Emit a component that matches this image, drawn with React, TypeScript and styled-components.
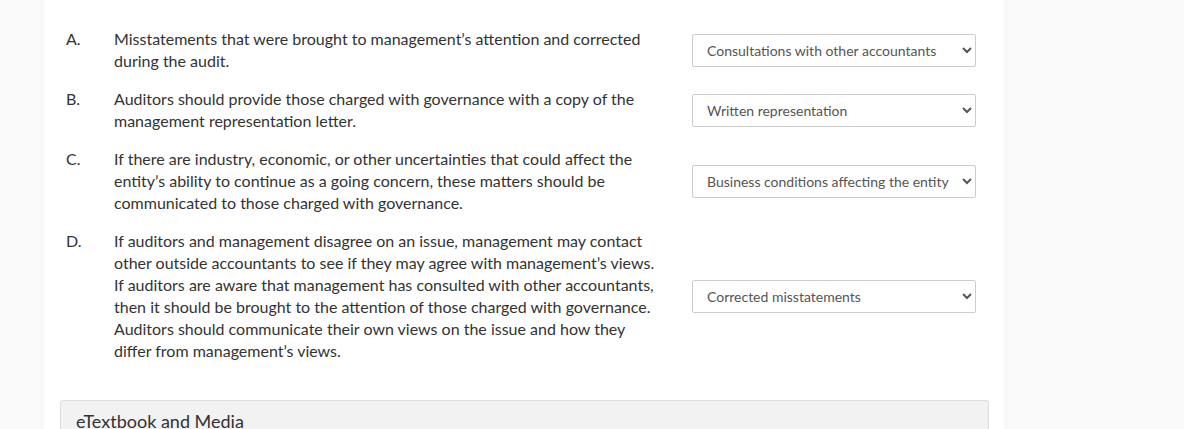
import styled, { createGlobalStyle } from "styled-components";

const GlobalStyle = createGlobalStyle`
  html, body {
    margin: 0;
    padding: 0;
    background: #f9f9f9;
    font-family: Lato, "Open Sans", sans-serif;
    color: #333;
  }
`;

const Panel = styled.div`
  margin-left: 44px;
  width: 960px;
  min-height: 429px;
  background: #fff;
  padding-top: 28px;
  box-sizing: border-box;
`;

const List = styled.ol`
  list-style: none;
  margin: 0;
  padding: 0 0 0 22px;
  display: flex;
  flex-direction: column;
  gap: 16px;
`;

const Row = styled.li`
  display: grid;
  grid-template-columns: 48px 556px 284px;
  column-gap: 0;
  align-items: center;
`;

const Letter = styled.span`
  align-self: start;
  font-size: 16px;
  line-height: 22px;
`;

const Statement = styled.p`
  margin: 0;
  padding-right: 8px;
  font-size: 16px;
  line-height: 22px;
`;

const Select = styled.select`
  margin-left: 22px;
  width: 284px;
  height: 33px;
  box-sizing: border-box;
  padding: 0 8px 0 10px;
  border: 1px solid #ccc;
  border-radius: 2px;
  background: #fff;
  color: #555;
  font-family: Lato, "Open Sans", sans-serif;
  font-size: 14px;
`;

const Media = styled.div`
  margin: 38px 15px 0 16px;
  background: #f2f2f2;
  border: 1px solid #ddd;
  border-radius: 3px;
  padding: 9px 15px;
  font-size: 18px;
  line-height: 22px;
  color: #333;
`;

const options = [
  "Consultations with other accountants",
  "Written representation",
  "Business conditions affecting the entity",
  "Corrected misstatements",
];

const items = [
  {
    letter: "A.",
    text: "Misstatements that were brought to management’s attention and corrected during the audit.",
    answer: options[0],
  },
  {
    letter: "B.",
    text: "Auditors should provide those charged with governance with a copy of the management representation letter.",
    answer: options[1],
  },
  {
    letter: "C.",
    text: "If there are industry, economic, or other uncertainties that could affect the entity’s ability to continue as a going concern, these matters should be communicated to those charged with governance.",
    answer: options[2],
  },
  {
    letter: "D.",
    text: "If auditors and management disagree on an issue, management may contact other outside accountants to see if they may agree with management’s views. If auditors are aware that management has consulted with other accountants, then it should be brought to the attention of those charged with governance. Auditors should communicate their own views on the issue and how they differ from management’s views.",
    answer: options[3],
  },
];

const App = () => {
  return (
    <>
      <GlobalStyle />
      <Panel>
        <List>
          {items.map((item) => (
            <Row key={item.letter}>
              <Letter>{item.letter}</Letter>
              <Statement>{item.text}</Statement>
              <Select defaultValue={item.answer}>
                {options.map((o) => (
                  <option key={o}>{o}</option>
                ))}
              </Select>
            </Row>
          ))}
        </List>
        <Media>eTextbook and Media</Media>
      </Panel>
    </>
  );
};

export default App;
